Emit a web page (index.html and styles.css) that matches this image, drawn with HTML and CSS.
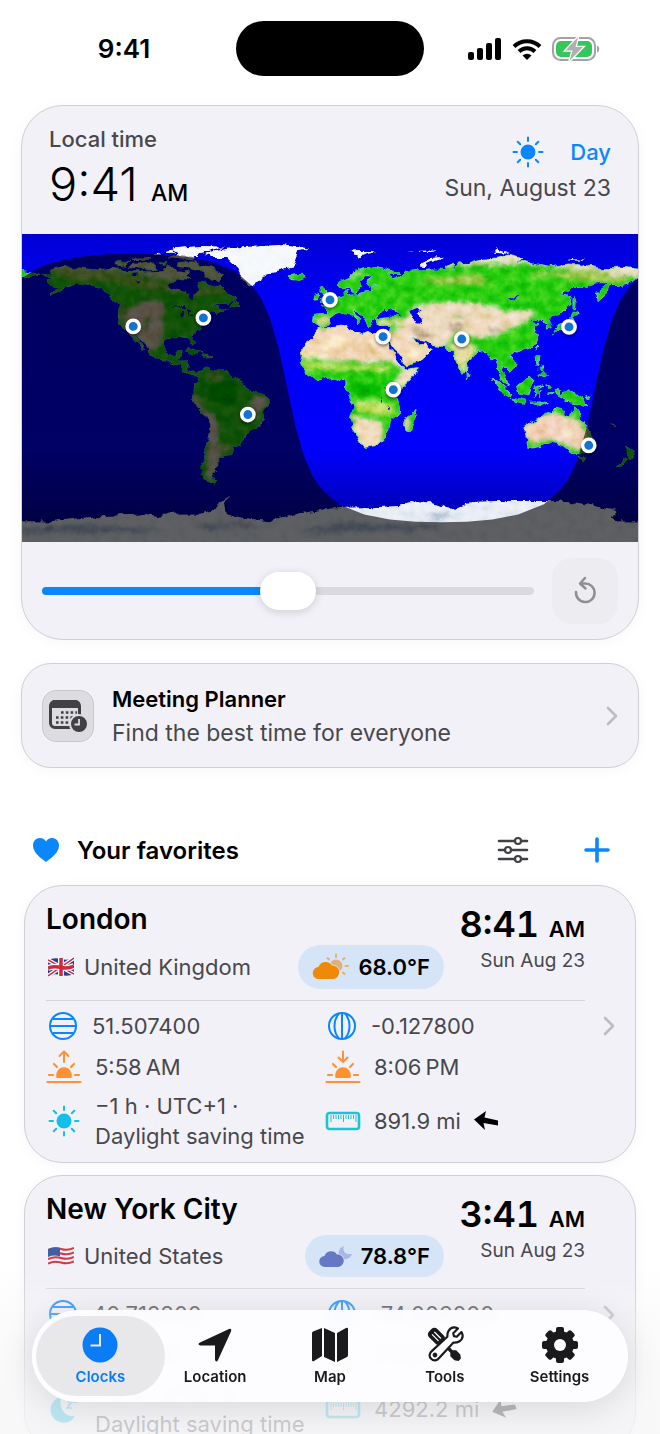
FILE: index.html
```html
<!DOCTYPE html>
<html lang="en">

<head>
    <meta charset="UTF-8">
    <meta name="viewport" content="width=device-width, initial-scale=1.0">
    <title>World Clock</title>
    <link rel="stylesheet" href="styles.css">
</head>

<body>
    <!-- Shared icons -->
    <svg class="sprite" aria-hidden="true">
        <symbol id="sun" viewBox="0 0 32 32">
            <circle cx="16" cy="16" r="7.500" fill="currentColor"/>
            <g stroke="currentColor" stroke-width="2" stroke-linecap="round">
                <path d="M16 1.500v3.500M16 27v3.500M1.500 16h3.500M27 16h3.500M5.700 5.700l2.500 2.500M23.800 23.800l2.500 2.500M5.700 26.300l2.500-2.500M23.800 8.200l2.500-2.500"/>
            </g>
        </symbol>
        <symbol id="latitude" viewBox="0 0 30 30">
            <g fill="none" stroke="currentColor" stroke-width="2">
                <circle cx="15" cy="15" r="13"/>
                <path d="M5 8h20M2 15h26M5 22h20"/>
            </g>
        </symbol>
        <symbol id="longitude" viewBox="0 0 30 30">
            <g fill="none" stroke="currentColor" stroke-width="2">
                <circle cx="15" cy="15" r="13"/>
                <path d="M15 2v26M12 2.500C6 9 6 21 12 27.500M18 2.500C24 9 24 21 18 27.500"/>
            </g>
        </symbol>
        <symbol id="horizon" viewBox="0 0 36 34">
            <path d="M10.500 28a7.800 8.500 0 1 1 15 0z" fill="currentColor"/>
            <path d="M1.500 32h33M3 25h4M29 25h4M8 14l3 3M28 14l-3 3" stroke="currentColor" stroke-width="2.200" stroke-linecap="round"/>
        </symbol>
        <symbol id="sunrise" viewBox="0 0 36 34">
            <use href="#horizon"/>
            <path d="M18 12V1.500M13.500 6L18 1.500 22.500 6" fill="none" stroke="currentColor" stroke-width="2" stroke-linecap="round" stroke-linejoin="round"/>
        </symbol>
        <symbol id="sunset" viewBox="0 0 36 34">
            <use href="#horizon"/>
            <path d="M18 1.500V12M13.500 7.500L18 12l4.500-4.500" fill="none" stroke="currentColor" stroke-width="2" stroke-linecap="round" stroke-linejoin="round"/>
        </symbol>
        <symbol id="ruler" viewBox="0 0 36 20">
            <rect x="2" y="2" width="32" height="16" rx="2.500" fill="none" stroke="currentColor" stroke-width="2.600"/>
            <path d="M6 4v7M8.500 4v4M11 4v4M13.500 4v4M16 4v4M18.500 4v7M21 4v4M23.500 4v4M26 4v4M28.500 4v4M31 4v7" stroke="currentColor" stroke-width="1"/>
        </symbol>
        <symbol id="arrow" viewBox="0 0 24 20">
            <path d="M0 8.500L12 0l-1.500 6.500L24 9.500v5l-14.500-2.500L11 19z" fill="currentColor"/>
        </symbol>
        <symbol id="chevron" viewBox="0 0 12 20">
            <path d="M2 2l8 8-8 8" fill="none" stroke="currentColor" stroke-width="2.600" stroke-linecap="round" stroke-linejoin="round"/>
        </symbol>
    </svg>

    <header class="status-bar">
        <span class="status-time">9:41</span>
        <span class="island"></span>
        <span class="status-icons">
            <svg width="34" height="22" viewBox="0 0 34 22">
                <rect x="0" y="14" width="6" height="8" rx="2"/>
                <rect x="9" y="10" width="6" height="12" rx="2"/>
                <rect x="18" y="5" width="6" height="17" rx="2"/>
                <rect x="27" y="0" width="6" height="22" rx="2"/>
            </svg>
            <svg class="wifi" width="30" height="22" viewBox="0 0 30 22">
                <g fill="none" stroke="#000" stroke-width="4">
                    <path d="M2 8.500a18.500 18.500 0 0 1 26 0"/>
                    <path d="M7 13.500a11.500 11.500 0 0 1 16 0"/>
                </g>
                <path d="M15 22l-4.500-4.500a6.400 6.400 0 0 1 9 0z"/>
            </svg>
            <svg width="48" height="24" viewBox="0 0 48 24">
                <rect x="1" y="1" width="42" height="22" rx="7.500" fill="none" stroke="#a3a3a5" stroke-width="2"/>
                <path d="M45 8.500c3 1 3 6 0 7z" fill="#a3a3a5"/>
                <rect x="4" y="4" width="36" height="16" rx="5" fill="#35c759"/>
                <path d="M26 0L13.500 13.500h7L17.500 24 31 10h-7.500z" fill="#b0b0b2" stroke="#fff" stroke-width="2.500" paint-order="stroke"/>
            </svg>
        </span>
    </header>

    <main>
        <!-- Local time with day and night map -->
        <section class="card local">
            <div class="local-head">
                <div>
                    <h1>Local time</h1>
                    <p class="local-time">9:41 <span>AM</span></p>
                </div>
                <div class="local-day">
                    <p class="day"><svg width="32" height="32"><use href="#sun"/></svg>Day</p>
                    <p class="date">Sun, August 23</p>
                </div>
            </div>

            <!-- Map units are degrees: x = longitude, y = -latitude -->
            <svg class="map" viewBox="-180 -90 360 180" role="img" aria-label="World map">
                <defs>
                    <linearGradient id="sea" x1="0" y1="0" x2="0" y2="1">
                        <stop offset="0" stop-color="#0000d4"/>
                        <stop offset=".2" stop-color="#0000f6"/>
                        <stop offset=".7" stop-color="#0000fc"/>
                        <stop offset=".9" stop-color="#0000b8"/>
                        <stop offset="1" stop-color="#000080"/>
                    </linearGradient>
                    <filter id="soft" x="-20%" y="-20%" width="140%" height="140%">
                        <feGaussianBlur stdDeviation="1.200"/>
                    </filter>
                    <filter id="terrain" x="0" y="0" width="100%" height="100%" color-interpolation-filters="sRGB">
                        <feTurbulence type="fractalNoise" baseFrequency=".18" numOctaves="4" seed="4" result="noise"/>
                        <feDisplacementMap in="SourceGraphic" in2="noise" scale="4" xChannelSelector="R" yChannelSelector="G" result="land"/>
                        <feColorMatrix in="noise" values="0 0 1.200 0 -.02  0 0 .8 0 .16  0 0 1.200 0 -.05  0 0 0 0 1"/>
                        <feComposite in2="land" operator="in" result="grain"/>
                        <feBlend in="grain" in2="land" mode="soft-light"/>
                    </filter>
                    <path id="coast" d="M-168-66L-162-67-163-69-156-71-145-70-136-69-128-70-120-69-115-68-108-68-97-68-95-72-92-69-86-68-82-68-83-66-88-64-94-61-94-58.500-88-56.500-82-55-82-52.500-79.500-51.500-79-54.500-76.500-57-78-60-77-62.500-73-62-69-59-66-60-64-60-61-56-56-53-56-51.500-60-50-66-50-70-47.500-65-49-64-46-60-46.500-64-44.500-66-43.500-67-45-70-43.500-70.500-42-74-40.500-76-37-76-35-79-33-81-31-80-27-80.500-25.200-82-27-83-29.500-85-29.800-89-30.300-91-29.300-94-29.600-97-28-97.500-25-97.500-22-96-19-94.500-18.200-91.500-18.600-90.500-21-87-21.500-88-18-88.500-15.800-84-15.800-83.200-14-83.700-11-82-9-79.500-9.500-77.500-8.500-75-11-71.500-12.300-67-10.700-62-10.600-60-8.500-57-6-52-5-50-1-44 2.500-39 3.500-35 6-35 9-38.500 13-39 18-41 22-45 23.500-48.500 26-49 29-53 33.500-56.500 34.800-58 34-57 36.500-58 38.300-62 39-62.500 41-65 41-65 45-67.500 46.500-66 48-69 50.500-68.500 52.500-65.500 54.700-68 55.600-72 54-75 51-75.500 47-73 42-73.500 37-71.500 31-70.300 24-70.300 18.300-76 14-79 8-81 6-81 4-80 2.500-80-.5-77.500-4-77.500-7-80-7.300-83-8.200-85.700-10-87.500-13-91.500-14-94-16-97-15.800-102-18-105.500-20-105.500-22.500-109-25.800-112.500-30-114.500-31.700-112-28-109.500-23-112-25-114.500-28-117-32.500-120.500-34.500-123.500-38.500-124.300-42-124-46-123-49-127-51-130-55-134-58-140-59.800-146-60.800-151-59.500-154-58.500-158-56.500-164-54.600-158-58.500-162-59-165-61.500-165-63-161-64.500-166-64.700z
                        M-62-66L-65-63-70-64-74-65-73-68-80-70-89-71-89-73.500-80-73.700-72-71-67-69zM-117-71L-105-69-101-69.500-105-73-115-73zM-125-72L-120-71.300-117-74-124-74zM-100-73L-96-72-96-74zM-87-64L-81-63.500-85-66zM-59-48L-53-47-56-51z
                        M-24-65.500L-22-64-18-63.400-14-65-16-66.400-21-66zM-85-22L-82-23.300-77-21.500-74.300-20.100-78-20zM-74-20L-68.500-18.600-74-18z
                        M-6-35.800L-1-35.300 10-37.200 11-34 15-32.300 19.500-30.300 22-32.800 25-31.700 32-31.200 32.500-30 34-26.500 37-21 37.500-18.500 40-15 43-12 44-10.500 51-12 50-8 46-3 41.500 1.500 39 6 40.500 11 40.500 15 36 19 35 24 32.700 27 31 30 27 33.700 20 34.800 18 32.500 15 27 12 18 13.500 12 12 6 9 1 9.500-4 6-4.300 2-6.300-4-5.200-8-4.500-13-8.500-16.800-13-17.300-15-16.300-19-17-21-14-26-10-29.500-9.500-32z
                        M49.500 12L50.300 16 47.500 25 44.500 24.500 43.500 21.500 44.500 17 47.500 15z
                        M-9.500-38.500L-9-43.300-1.500-43.500-1.300-46-4.500-48.400-1.500-48.700 2-51 5-53.300 8.500-54 8-57 10.500-57.600 10-55 12-54.200 18-54.700 21-55.500 21.500-57.500 24-57.200 23.500-59.200 29-60 22.500-60 21.500-63 25.500-65.300 22-65.700 17.300-61.500 18.500-60 16.500-57 14.200-55.400 12.500-56.500 11-59 7-58 5-60 5.200-62 11-64.500 15-68.500 21-70 27-71 31-70 40-67.500 40-66.300 34-66.600 37-64 41-65 44-68.300 54-68.500 60-69 68-68.500 67-71 72-73 73-68 75-72.500 81-73 87-75 98-76 104-77.700 113-75.500 108-73.500 113-74 129-71 140-72.500 150-71.500 160-69.700 170-70 180-69 186-68 186-65 180-65 177-62.500 170-60 163.500-59.800 162-56 156.700-51 155.600-56 163-61.500 156-61.500 150-59.500 142-59.200 135-54.700 141-53 140-48 135-43.500 130.500-42.300 127.500-39.800 129.300-36 126.500-34.400 126.500-37 125-39.500 121.500-39 122-40.500 117.700-39 119-37.300 122.500-37 119.300-35 121.800-31 121-28 117-23.500 110.500-21 108-21.700 105.800-19 109-13 107-10.500 105-8.700 103-11 100.500-13.400 99.500-10 103.500-4 104-1.300 101-3 98.500-8 98.500-14 97-17 94.300-16 92-21.500 90-22 87-21.400 82-16.500 80-15 80-11 77.700-8 73-17 72.500-21 69.500-21.500 67-24.800 61.500-25.200 57-26.800 51.500-28 48-30 50.500-26.500 51.500-24.500 56-26 56.500-24 59.700-22.500 55-17.500 45-12.800 43-14 42.500-16.500 39-21 35-28 34.700-31 36-35.500 35.500-36.600 30.500-36.500 27-37.500 26.500-40 29.500-41.100 35-42 41.500-41.500 38-44.500 39-47 35-46 33.500-44.500 31-46.600 28.500-44 28-41.500 26-40.700 23-40.500 24-38 22.500-36.500 19.500-41 19-42 13.700-45.300 14-42.500 18-40 16.500-38 15.500-40 10-44 7-43.500 3.500-43.200 0-40.500 0-38.500-2-36.800-5.500-36z
                        M-5.500-50L1-51 1.500-52.700-2-55.500-2-57.500-5-58.500-6-56.500-3-54-5-52zM-10-52L-6.500-52.300-6-55-9.500-54zM-186-69L-173-67-170-66-175-64.500-186-65z
                        M130-31.500L131.500-33.800 135.500-33.700 140.500-35.500 142-39.500 141-41.400 139.500-38.500 136.500-37 132-35.300zM140-42L143.300-42 145.500-43.500 141.800-45.400zM142-46L143.500-46.500 143.800-49.500 143-54 142-52zM120.500-23L122-25 121-25.500zM80-9.500L81.800-7 80.300-6z
                        M120.500-18.500L122-18 121.500-14 124-13 121-13.500zM122-7L125-10 126.500-7.500 125.500-6zM122-11L125-12.500 124-10z
                        M95.300-5.600L98-4 103.500 1 106 3 105.500 5.800 102 4 98.500-1.500zM105.300 6.700L111 6.300 114.500 7.800 114 8.900 108 7.800zM109-1.500L113-3 117-7 119-5 117.700-1 116 4 110.500 3zM119.500 5.500L119.500-.5 125-1.700 121-.2 121 2 123 1 121.500 3 122.500 5 120.700 3zM127.500-2L129 0 128 1zM127 3.500L131 3 130 4zM117 8.300L123 8.200 127 8.500 123.500 10.300 119 9.300z
                        M131 .8L134 .9 135 3.300 138 1.700 144 3.800 147.500 6 150.500 10.500 147 9.500 143 9 138 8.300 138 6.500 133 4zM149 5.500L152 4 151 6.200z
                        M114 22L114 26 115.500 31 115 34.300 118 35 123.500 34 129 31.600 134 32.800 138 35.500 140 38 146 39 150 37.500 153 32 153 26 149 21 146 18.500 145.300 15 142.500 10.800 141 15 140.500 17.500 136 15.500 136.500 12.300 132 11.300 129.500 15 126 14 122.500 17.500z
                        M144.700 40.800L148.300 41 147 43.500zM173 34.500L178.500 37.700 175.500 41.500 174 39.500zM172.700 40.600L174 41.800 170.500 46 167 46.500zM164 20.300L167 22.300 166 22.300z"/>
                    <clipPath id="land-clip"><use href="#coast"/></clipPath>
                </defs>

                <rect x="-180" y="-90" width="360" height="180" fill="url(#sea)"/>

                <g filter="url(#terrain)">
                    <!-- keeps the filter box a little wider than the map -->
                    <rect x="-190" y="-100" width="380" height="200" fill="none"/>
                    <use href="#coast" fill="#1fcb0c" stroke="#35dca0" stroke-width=".4"/>
                    <g clip-path="url(#land-clip)">
                        <g filter="url(#soft)">
                            <!-- tundra -->
                            <path fill="#c9cf98" d="M-170-73L-60-76-60-64-75-63-95-63-115-67-140-69-170-69zM60-80L190-80 190-63 170-65 150-68 120-72 90-72 60-70z"/>
                            <path fill="#8fc23c" d="M-165-70L-140-69-120-66-95-61-80-58-62-58-62-55-85-55-110-59-130-63-150-63zM120-68L175-69 172-61 155-62 140-63 130-66 118-65zM50-63L85-67 95-61 70-60z"/>
                            <path fill="#eadfc8" d="M85-79L115-78 110-73 92-73zM160-69L188-70 188-66 165-66zM8-63L16-68 21-69 14-65z"/>
                            <!-- North American west -->
                            <path fill="#ddc6ab" d="M-121-44L-112-49-102-52-97-48-98-38-98-30-101-24-104-21-110-26-116-31-121-38z"/>
                            <path fill="#6fae30" d="M-108-42L-104-42-106-34-110-34zM-124-49L-119-49-120-40-123-40z"/>
                            <!-- Andes and the south -->
                            <path fill="#d9c6b0" d="M-81 5L-78 3-74 12-67 16-64 22-66 32-64 40-66 50-69 53-73 50-71 40-73 18zM-45 5L-37 5-38 12-43 17-46 12z"/>
                            <path fill="#9bb450" d="M-72-10L-62-9-64-5-72-6zM-53 12L-44 12-46 19-52 19zM-64 33L-58 33-59 38-65 38z"/>
                            <!-- Sahara, Arabia, Horn, Kalahari -->
                            <path fill="#f0d4b4" d="M-20-33L10-38 36-33 44-38 52-32 62-26 60-16 44-11 36-15 20-15 0-16-18-17z"/>
                            <path fill="#eed8b8" d="M41-10L52-13 50-6 42 1 38-3zM12 15L20 18 28 18 32 24 28 36 18 38z"/>
                            <path fill="#b9dc54" d="M-18-15L0-14.500 20-13 36-13 37-10 20-10 0-11-16-11zM14 8L36 8 38 16 28 16 16 14z"/>
                            <path fill="#e8c898" d="M-12-28L0-26 8-22-2-20zM14-26L26-26 26-20 16-19z"/>
                            <path fill="#fbeecb" d="M-8-24L6-31 12-29-2-22zM26-30L33-30 30-26 22-25zM45-23L54-22 50-18 45-19zM-14-20L0-19 0-17-15-17z"/>
                            <!-- Spain, Turkey, Iran, India, central Asia -->
                            <path fill="#e0d69c" d="M-8-42L0-42-1-37-7-37zM27-40L44-41 44-37 28-37z"/>
                            <path fill="#ecd8bc" d="M42-38L50-48 60-50 78-50 90-49 105-45 118-46 120-42 112-38 104-34 95-30 84-29 76-33 70-28 66-24 54-26 46-32z"/>
                            <path fill="#e6dca0" d="M69-27L80-27 86-23 82-17 79-10 76-10 72-20z"/>
                            <path fill="#b09678" d="M46-36L56-33 60-29 52-29zM68-37L78-37 76-33 70-33zM92-35L100-35 100-33 94-32z"/>
                            <path fill="#5fae32" d="M70-42L80-43 84-46 76-41z"/>
                            <!-- Australia and Madagascar -->
                            <path fill="#f0cdb6" d="M112 23L116 20 124 16 132 14 138 18 144 17 150 24 152 31 147 36 140 35 134 32 128 30 120 33 115 30z"/>
                            <path fill="#f4ead0" d="M136 24L143 22 143 30 137 30z"/>
                            <path fill="#ead0a8" d="M43 18L47 15 46 25 43 25z"/>
                            <path fill="#00b400" d="M11-3L28-3 28 4 14 4zM-74-3L-56-4-52 4-58 10-70 8z"/>
                        </g>
                    </g>
                    <!-- ice -->
                    <g fill="#f4f7fb">
                        <path d="M-73-78.300L-68-76-60-76-54-70-52-66-48-61-44-60-41-63-40-65.500-32-68-22-70.500-20-75-18-80-12-81.500-30-83.500-45-82.500-60-82-66-80.500z"/>
                        <path d="M-90-77L-78-76.500-75-79-62-82.500-75-83-92-81.500-88-79zM-97-79L-90-79-92-81zM-104-78L-99-78-101-79z"/>
                        <path d="M52-71L57-70.700 56-73 68-76.700 60-76 54-73zM11-79.500L17-76.800 22-79 27-80 16-80zM95-79L105-78.500 98-81zM45-80.500L62-81 58-80zM138-75.300L150-75 142-76z"/>
                    </g>
                    <path fill="#b5aa90" d="M-97-76L-80-74.700-80-76.300-92-76.700zM-116-75L-106-75-105-76.500-117-76z"/>
                    <path fill="#e6ebf3" d="M-186 78L-165 78-150 76.500-135 75-110 74-100 75.500-98 73.500-75 73.500-68 71-66 68-58 63.500-62 67-61 73-50 76-35 78-25 75-17 73 0 70.500 10 70 30 69.500 40 69 52 66 60 67.500 69 70 73 70 80 67 87 66.500 100 66 110 66 128 66 145 67 157 69.500 168 72 164 76 168 78 186 78V98H-186z"/>
                    <path fill="#7894bb" opacity=".6" filter="url(#soft)" d="M-180 82L-150 80-120 81-95 83-110 84-150 85-180 85zM5 78L30 81 60 79 66 82 20 84-20 84zM55 75L68 73 70 76 60 77zM-80 80L-50 78-40 81-70 83z"/>
                    <!-- inland water -->
                    <path fill="#0000ee" d="M47-45L51-47 53-45 50.500-44 53.500-41 54-37 50-37.300 49-40zM-92-47L-86-48.500-85-46.500-88-47zM-88-45L-86-46-86-42-87.500-42zM-84-46L-80-45-82-43zM-83-42L-79-43-80-42zM104-51.500L109-55 110-55 106-51.500zM31.500-.5L34 0 33 2.500zM-117-66L-112-67-113-65zM-115-62L-110-62.500-112-61zM29 4L31 8 30 8zM34 10L35 14 34 14z"/>
                </g>

                <!-- night side -->
                <path fill="#000" opacity=".6" d="M-180-64.300L-170-70.500-160-73.900-145-76.800-130-78.100-115-78.500-100-78.100-85-76.800-70-73.900-55-67.900-45-59.200-40-51.800-35-40.500-30-23.200-25 0-20 23.200-15 40.500-10 51.800-5 59.200 5 67.900 20 73.900 35 76.800 50 78.100 65 78.500 80 78.100 95 76.800 110 73.900 125 67.900 135 59.200 140 51.800 145 40.500 150 23.200 155 0 160-23.200 165-40.500 170-51.800 175-59.200 180-64.300V90H-180z"/>

                <g class="pins">
                    <circle cx="-115" cy="-36" r="3.600"/>
                    <circle cx="-74" cy="-41" r="3.600"/>
                    <circle cx="-48" cy="15.500" r="3.600"/>
                    <circle cx="0" cy="-51.500" r="3.600"/>
                    <circle cx="31" cy="-30" r="3.600"/>
                    <circle cx="37" cy="1" r="3.600"/>
                    <circle cx="77" cy="-28.600" r="3.600"/>
                    <circle cx="139.700" cy="-35.700" r="3.600"/>
                    <circle cx="151.200" cy="33.500" r="3.600"/>
                </g>
            </svg>

            <div class="time-travel">
                <input type="range" min="0" max="100" value="50" aria-label="Time offset">
                <button class="reset" aria-label="Reset time">
                    <svg width="24" height="30" viewBox="0 0 24 30">
                        <path d="M3 16a9.300 9.300 0 1 0 9-8.500H8M12 2L7 7.500l5.500 5" fill="none" stroke="currentColor" stroke-width="2.500" stroke-linecap="round" stroke-linejoin="round"/>
                    </svg>
                </button>
            </div>
        </section>

        <a class="card planner" href="#planner">
            <span class="planner-icon">
                <svg width="40" height="34" viewBox="0 0 40 34">
                    <rect x="2.500" y="2.500" width="29" height="26" rx="4.500" fill="none" stroke="#404045" stroke-width="3"/>
                    <path d="M2 9V6a5 5 0 0 1 5-5h20a5 5 0 0 1 5 5v3z" fill="#404045"/>
                    <path d="M13 13.500h16M8 18.500h20M8 23.500h14" stroke="#404045" stroke-width="2.600" stroke-dasharray="2.600 2.200"/>
                    <circle cx="31" cy="25" r="9" fill="#404045" stroke="#dcdce1" stroke-width="2"/>
                    <path d="M31 20v5.500h-4.500" fill="none" stroke="#dcdce1" stroke-width="1.800"/>
                </svg>
            </span>
            <span class="planner-text">
                <strong>Meeting Planner</strong>
                <span>Find the best time for everyone</span>
            </span>
            <svg class="chevron" width="12" height="20"><use href="#chevron"/></svg>
        </a>

        <!-- Favorites -->
        <div class="favorites-head">
            <svg width="26" height="24" viewBox="0 0 26 24"><path d="M13 24C6 19 0 14 0 7.500 0 3 3 0 7 0c2.700 0 4.800 1.400 6 3.500C14.200 1.400 16.300 0 19 0c4 0 7 3 7 7.500C26 14 20 19 13 24z" fill="#0a87ff"/></svg>
            <h2>Your favorites</h2>
            <button class="options" aria-label="Options">
                <svg width="32" height="28" viewBox="0 0 32 28">
                    <g stroke="#404045" stroke-width="2.600" stroke-linecap="round" fill="#fff">
                        <path d="M2 5h28M2 14h28M2 23h28"/>
                        <g stroke-width="2.200"><circle cx="21" cy="5" r="3"/><circle cx="11" cy="14" r="3"/><circle cx="21" cy="23" r="3"/></g>
                    </g>
                </svg>
            </button>
            <button class="add" aria-label="Add city">
                <svg width="26" height="26" viewBox="0 0 26 26"><path d="M13 2v22M2 13h22" stroke="#0a87ff" stroke-width="3.600" stroke-linecap="round"/></svg>
            </button>
        </div>

        <a class="card city" href="#london">
            <div class="city-body">
                <div class="city-head">
                    <div class="city-place">
                        <h3>London</h3>
                        <div class="city-sub">
                            <svg width="26" height="20" viewBox="0 0 26 20">
                                <path d="M0 3q6-3 13-1t13-1v16q-6 3-13 1T0 19z" fill="#27408f"/>
                                <path d="M0 3l26 14M26 1L0 19" stroke="#fff" stroke-width="4"/>
                                <path d="M0 3l26 14M26 1L0 19" stroke="#d0283c" stroke-width="1.500"/>
                                <path d="M13 1v18M0 11q6-2 13-.5T26 9" fill="none" stroke="#fff" stroke-width="6"/>
                                <path d="M13 1v18M0 11q6-2 13-.5T26 9" fill="none" stroke="#d0283c" stroke-width="3.500"/>
                            </svg>
                            <span>United Kingdom</span>
                            <span class="weather">
                                <svg width="38" height="28" viewBox="0 0 38 28">
                                    <g fill="#dfb27a" stroke="#dfb27a" stroke-width="2" stroke-linecap="round">
                                        <circle cx="24" cy="13" r="5.500"/>
                                        <path d="M24 1.500v2.500M15.500 5l1.500 1.500M32.500 5L31 6.500M33.500 13H36M31 19.500l1.500 1.500"/>
                                    </g>
                                    <path d="M7 26a6 6 0 0 1-.5-12A7.500 7.500 0 0 1 20 12.500a6.800 6.800 0 0 1 1.500 13.500z" fill="#ee8a07" stroke="#d5e5f7" stroke-width="1.500" paint-order="stroke"/>
                                </svg>
                                68.0°F
                            </span>
                        </div>
                    </div>
                    <div class="city-clock">
                        <p class="city-time">8:41 <span>AM</span></p>
                        <p class="city-date">Sun Aug 23</p>
                    </div>
                </div>
                <ul class="facts">
                    <li class="blue"><svg width="30" height="30"><use href="#latitude"/></svg><span>51.507400</span></li>
                    <li class="blue"><svg width="30" height="30"><use href="#longitude"/></svg><span>-0.127800</span></li>
                    <li class="orange"><svg width="36" height="34"><use href="#sunrise"/></svg><span>5:58&#8239;AM</span></li>
                    <li class="orange"><svg width="36" height="34"><use href="#sunset"/></svg><span>8:06&#8239;PM</span></li>
                    <li class="cyan"><svg width="32" height="32"><use href="#sun"/></svg><span>−1 h · UTC+1 ·<br>Daylight saving time</span></li>
                    <li class="teal"><svg width="36" height="20"><use href="#ruler"/></svg><span>891.9 mi</span><svg class="bearing" width="24" height="20"><use href="#arrow"/></svg></li>
                </ul>
            </div>
            <svg class="chevron" width="12" height="20"><use href="#chevron"/></svg>
        </a>

        <a class="card city" href="#new-york">
            <div class="city-body">
                <div class="city-head">
                    <div class="city-place">
                        <h3>New York City</h3>
                        <div class="city-sub">
                            <svg width="26" height="20" viewBox="0 0 26 20">
                                <path d="M0 3q6-3 13-1t13-1v16q-6 3-13 1T0 19z" fill="#f3f3f3"/>
                                <path d="M0 4q6-3 13-1t13-1M0 8.500q6-3 13-1t13-1M0 13q6-3 13-1t13-1M0 17.500q6-3 13-1t13-1" fill="none" stroke="#d23a45" stroke-width="2"/>
                                <path d="M0 3q6-3 12-1.200v8.700q-6-2-12 .5z" fill="#3f5fa5"/>
                            </svg>
                            <span>United States</span>
                            <span class="weather">
                                <svg width="34" height="26" viewBox="0 1 34 26">
                                    <path d="M25 4c-2 5 1 9 8 8-1.500 5-7 6.500-11 4-4-3-3-10 3-12z" fill="#a9b6e6"/>
                                    <path d="M6 25a5.500 5.500 0 0 1-.5-11A7 7 0 0 1 18 12.500a6.300 6.300 0 0 1 1.500 12.500z" fill="#6677c4" stroke="#d5e5f7" stroke-width="1.500" paint-order="stroke"/>
                                </svg>
                                78.8°F
                            </span>
                        </div>
                    </div>
                    <div class="city-clock">
                        <p class="city-time">3:41 <span>AM</span></p>
                        <p class="city-date">Sun Aug 23</p>
                    </div>
                </div>
                <ul class="facts">
                    <li class="blue"><svg width="30" height="30"><use href="#latitude"/></svg><span>40.712800</span></li>
                    <li class="blue"><svg width="30" height="30"><use href="#longitude"/></svg><span>-74.006000</span></li>
                    <li class="orange"><svg width="36" height="34"><use href="#sunrise"/></svg><span>6:14&#8239;AM</span></li>
                    <li class="orange"><svg width="36" height="34"><use href="#sunset"/></svg><span>7:42&#8239;PM</span></li>
                    <li class="cyan">
                        <svg width="32" height="32" viewBox="0 0 32 32"><path d="M13 4a13 13 0 1 0 14 19C17 25 10 15 13 4z" fill="currentColor"/><path d="M19 9h5l-5 6h5M26 5h4l-4 4h4" fill="none" stroke="currentColor" stroke-width="1.500"/></svg>
                        <span>−6 h · UTC−4 ·<br>Daylight saving time</span>
                    </li>
                    <li class="teal"><svg width="36" height="20"><use href="#ruler"/></svg><span>4292.2 mi</span><svg class="bearing west" width="24" height="20"><use href="#arrow"/></svg></li>
                </ul>
            </div>
            <svg class="chevron" width="12" height="20"><use href="#chevron"/></svg>
        </a>
    </main>

    <div class="bottom-fade"></div>

    <nav class="tab-bar">
        <a class="tab active" href="#clocks">
            <svg width="36" height="36" viewBox="0 0 36 36"><circle cx="18" cy="18" r="17.500" fill="currentColor"/><path d="M18 7v11.500H8.500" fill="none" stroke="#e8eaee" stroke-width="2"/></svg>
            Clocks
        </a>
        <a class="tab" href="#location">
            <svg width="36" height="36" viewBox="0 0 36 36"><path d="M32 2Q35 1 34 4.500L21 33q-1.500 3-3 0V18.500H3q-3-1.200 0-3z" fill="currentColor"/></svg>
            Location
        </a>
        <a class="tab" href="#map">
            <svg width="36" height="36" viewBox="0 0 36 36"><path d="M0 6q0-1 1-1.600L10 1v28L2 34q-2 1-2-1zM12 1l11 5v29l-11-5zM25 6l9-5q2-1 2 1v26q0 1.300-1 2l-10 5z" fill="currentColor"/></svg>
            Map
        </a>
        <a class="tab" href="#tools">
            <svg width="42" height="42" viewBox="-4 -4 48 48">
                <g transform="rotate(-45 20 20)">
                    <rect x="13" y="-5" width="14" height="21" rx="5" fill="currentColor"/>
                    <path d="M18 0v11M22 0v11" stroke="#fff" stroke-width="1.500"/>
                    <path d="M18 16h4v15l3 3v7l-3 4h-4l-3-4v-7l3-3z" fill="currentColor"/>
                </g>
                <g transform="rotate(45 20 20)" fill="#fdfdff" stroke="currentColor" stroke-width="2.600" stroke-linejoin="round">
                    <path d="M17-5v8l3 2 3-2v-8c5 1.500 7 5.500 6 10-.7 3-2.500 4.500-4 6l1 25c.5 4.500-2 7.500-6 7.500s-6.500-3-6-7.500l1-25c-1.500-1.500-3.300-3-4-6-1-4.500 1-8.500 6-10z"/>
                    <circle cx="20" cy="37" r="1.500"/>
                </g>
            </svg>
            Tools
        </a>
        <a class="tab" href="#settings">
            <svg width="38" height="38" viewBox="-19 -19 38 38">
                <g fill="currentColor">
                    <g id="teeth"><rect x="-4" y="-18" width="8" height="36" rx="2"/><rect x="-18" y="-4" width="36" height="8" rx="2"/></g>
                    <use href="#teeth" transform="rotate(45)"/>
                    <circle r="14"/>
                </g>
                <circle r="6" fill="#fff"/>
            </svg>
            Settings
        </a>
    </nav>
</body>

</html>
```
FILE: styles.css
```css
* {
    box-sizing: border-box;
}

body {
    margin: 0;
    height: 100vh;
    overflow: hidden;
    background: #fff;
    color: #000;
    font-family: Inter, "Liberation Sans", sans-serif;
    font-size: 23px;
}

h1, h2, h3, p, ul {
    margin: 0;
    padding: 0;
}

svg {
    display: block;
    flex-shrink: 0;
}

a {
    color: inherit;
    text-decoration: none;
}

button {
    padding: 0;
    border: none;
    background: none;
    cursor: pointer;
}

.sprite {
    position: absolute;
    width: 0;
    height: 0;
}

/* Status bar */
.status-bar {
    display: grid;
    grid-template-columns: 1fr 188px 1fr;
    align-items: center;
    padding: 21px 0 29px;
}

.status-time {
    font-size: 26px;
    font-weight: 600;
    text-align: center;
    padding-left: 12px;
}

.island {
    height: 55px;
    border-radius: 28px;
    background: #000;
}

.status-icons {
    display: flex;
    align-items: center;
    justify-content: center;
    gap: 10px;
    padding-right: 16px;
}

/* Cards */
main {
    padding: 0 21px;
}

.card {
    background: #f2f1f8;
    border: 1px solid #cfcfd4;
    box-shadow: 0 2px 14px rgba(0, 0, 0, 0.04);
}

.chevron {
    color: #bcbcc2;
}

/* Local time */
.local {
    border-radius: 42px;
    overflow: hidden;
}

.local-head {
    display: flex;
    justify-content: space-between;
    align-items: center;
    height: 128px;
    padding: 0 27px;
    color: #48484c;
}

.local-head h1 {
    font-size: 22px;
    font-weight: 500;
    line-height: 28px;
}

.local-time {
    font-size: 47px;
    font-weight: 300;
    line-height: 62px;
    color: #000;
}

.local-time span {
    font-size: 23px;
    font-weight: 500;
    line-height: 1;
}

.local-day {
    text-align: right;
    line-height: 36px;
}

.day {
    display: flex;
    align-items: center;
    justify-content: flex-end;
    gap: 26px;
    color: #0a87ff;
    font-size: 22px;
    font-weight: 500;
}

.map {
    width: 100%;
}

.pins circle {
    fill: #1373d2;
    stroke: #fff;
    stroke-width: 2;
    filter: drop-shadow(0 1px 1px rgba(0, 0, 0, 0.5));
}

.time-travel {
    display: flex;
    align-items: center;
    gap: 18px;
    padding: 16px 20px 15px;
}

.time-travel input {
    flex: 1;
    min-width: 0;
    height: 38px;
    margin: 0;
    appearance: none;
    background: none;
}

.time-travel input::-webkit-slider-runnable-track {
    height: 8px;
    border-radius: 4px;
    background: linear-gradient(to right, #0a87ff 50%, #d9d9de 50%);
}

.time-travel input::-webkit-slider-thumb {
    appearance: none;
    width: 56px;
    height: 38px;
    margin-top: -15px;
    border-radius: 19px;
    background: #fff;
    box-shadow: 0 2px 10px rgba(0, 0, 0, 0.15);
}

.reset {
    display: grid;
    place-items: center;
    width: 66px;
    height: 66px;
    border-radius: 20px;
    background: #edecf1;
    color: #8e8e93;
}

/* Meeting planner */
.planner {
    display: flex;
    align-items: center;
    gap: 18px;
    height: 105px;
    margin-top: 23px;
    padding: 0 20px;
    border-radius: 30px;
}

.planner-icon {
    display: grid;
    place-items: center;
    width: 52px;
    height: 52px;
    border: 1px solid #c8c8cd;
    border-radius: 14px;
    background: #dcdce1;
}

.planner-text {
    flex: 1;
    display: flex;
    flex-direction: column;
    line-height: 34px;
    color: #48484c;
}

.planner-text strong {
    font-size: 22px;
    font-weight: 600;
    color: #000;
}

/* Favorites */
.favorites-head {
    display: flex;
    align-items: center;
    height: 44px;
    margin: 60px 12px 13px;
}

.favorites-head h2 {
    flex: 1;
    margin-left: 18px;
    font-size: 24px;
    font-weight: 600;
}

.options {
    margin-right: 55px;
}

.add {
    margin-right: 17px;
}

.city {
    display: flex;
    align-items: center;
    margin: 0 3px 12px;
    padding: 15px 20px 11px 21px;
    border-radius: 38px;
}

.city-body {
    flex: 1;
    margin-right: 18px;
}

.city-head {
    display: flex;
    padding-bottom: 11px;
    border-bottom: 1px solid #d5d5db;
}

.city-place {
    flex: 1;
}

.city-place h3 {
    font-size: 28px;
    font-weight: 600;
    line-height: 36px;
    margin-bottom: 8px;
}

.city-sub {
    display: flex;
    align-items: center;
    gap: 10px;
    padding-left: 2px;
    color: #48484c;
    font-size: 22px;
}

.weather {
    display: flex;
    align-items: center;
    gap: 8px;
    margin-left: auto;
    padding: 8px 14px;
    border-radius: 22px;
    background: #d5e5f7;
    color: #000;
    font-weight: 600;
    line-height: 26px;
}

.city-clock {
    width: 141px;
    text-align: right;
    white-space: nowrap;
}

.city-time {
    font-size: 36px;
    font-weight: 600;
    font-variant-numeric: tabular-nums;
    line-height: 46px;
}

.city-time span {
    font-size: 22px;
    line-height: 1;
}

.city-date {
    font-size: 19px;
    line-height: 28px;
    color: #48484c;
}

.facts {
    display: grid;
    grid-template-columns: 279px 1fr;
    row-gap: 7px;
    padding-top: 8px;
    list-style: none;
}

.facts li {
    display: flex;
    align-items: center;
    gap: 13px;
    min-height: 34px;
    line-height: 30px;
    font-size: 22px;
}

.facts span {
    color: #48484c;
}

.facts .blue {
    color: #0a87ff;
    padding-left: 2px;
    gap: 14px;
}

.facts .orange {
    color: #ff9230;
}

.facts .cyan {
    color: #12bfe8;
    padding-left: 2px;
    gap: 15px;
}

.facts .teal {
    color: #1cc3d3;
}

.facts .bearing {
    color: #000;
}

.west {
    transform: rotate(-20deg);
}

/* Tab bar */
.bottom-fade {
    position: fixed;
    inset: auto 0 0;
    height: 170px;
    background: linear-gradient(rgba(246, 246, 247, 0), rgba(246, 246, 247, 0.35) 30%, rgba(246, 246, 247, 0.75) 75%);
    pointer-events: none;
}

.tab-bar {
    position: fixed;
    inset: auto 32px 32px;
    display: flex;
    height: 92px;
    padding: 0 11px;
    border-radius: 46px;
    background: rgba(253, 253, 255, 0.95);
    backdrop-filter: blur(5px);
    box-shadow: 0 6px 36px rgba(0, 0, 0, 0.12);
}

.tab {
    flex: 1;
    position: relative;
    display: flex;
    flex-direction: column;
    align-items: center;
    justify-content: flex-end;
    gap: 2px;
    padding-bottom: 15px;
    font-size: 15px;
    font-weight: 600;
    line-height: 20px;
    color: #1a1a1c;
}

.tab svg {
    height: 40px;
}

.tab.active {
    z-index: 0;
    color: #0a7cf5;
}

.tab.active::before {
    content: "";
    position: absolute;
    z-index: -1;
    inset: 6px -7px;
    border-radius: 40px;
    background: #e8e8eb;
}
```
